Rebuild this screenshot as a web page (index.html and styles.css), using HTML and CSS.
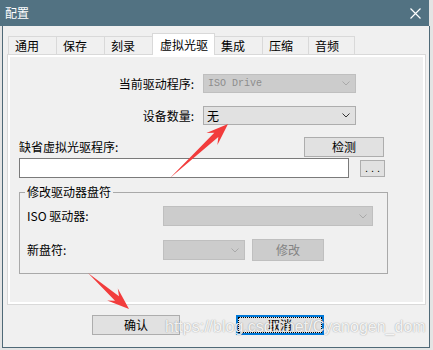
FILE: index.html
```html
<!DOCTYPE html>
<html lang="zh-CN">
<head>
    <meta charset="UTF-8">
    <meta name="viewport" content="width=device-width, initial-scale=1.0">
    <title>配置</title>
    <link rel="stylesheet" href="styles.css">
</head>
<body>

<div class="window">
    <div class="titlebar">
        <span class="title">配置</span>
        <svg class="close" width="11" height="11" viewBox="0 0 11 11">
            <path d="M0.5 0.5 L10.5 10.5 M10.5 0.5 L0.5 10.5" stroke="#fff" stroke-width="1.2" fill="none"/>
        </svg>
    </div>

    <div class="client">
        <div class="tabs">
            <div class="tab">通用</div>
            <div class="tab">保存</div>
            <div class="tab">刻录</div>
            <div class="tab tab-active">虚拟光驱</div>
            <div class="tab">集成</div>
            <div class="tab tab-narrow">压缩</div>
            <div class="tab tab-narrow">音频</div>
        </div>

        <div class="panel">
            <div class="page">
                <div class="row">
                    <span class="row-label">当前驱动程序:</span>
                    <div class="combo combo-main combo-disabled">
                        <span class="mono">ISO Drive</span>
                        <svg class="chevron" width="8" height="5" viewBox="0 0 8 5"><path d="M0.5 0.5 L4 4 L7.5 0.5" fill="none" stroke="currentColor"/></svg>
                    </div>
                </div>

                <div class="row row-count">
                    <span class="row-label">设备数量:</span>
                    <div class="combo combo-main">
                        <span>无</span>
                        <svg class="chevron" width="8" height="5" viewBox="0 0 8 5"><path d="M0.5 0.5 L4 4 L7.5 0.5" fill="none" stroke="currentColor"/></svg>
                    </div>
                </div>

                <div class="row row-default">
                    <span>缺省虚拟光驱程序:</span>
                    <button class="btn btn-detect">检测</button>
                </div>

                <div class="row row-path">
                    <div class="path-input"></div>
                    <button class="btn btn-browse">...</button>
                </div>

                <fieldset class="group">
                    <legend>修改驱动器盘符</legend>
                    <div class="group-row">
                        <span class="group-label">ISO 驱动器:</span>
                        <div class="combo combo-iso combo-disabled">
                            <span></span>
                            <svg class="chevron" width="8" height="5" viewBox="0 0 8 5"><path d="M0.5 0.5 L4 4 L7.5 0.5" fill="none" stroke="currentColor"/></svg>
                        </div>
                    </div>
                    <div class="group-row group-row-letter">
                        <span class="group-label">新盘符:</span>
                        <div class="combo combo-letter combo-disabled">
                            <span></span>
                            <svg class="chevron" width="8" height="5" viewBox="0 0 8 5"><path d="M0.5 0.5 L4 4 L7.5 0.5" fill="none" stroke="currentColor"/></svg>
                        </div>
                        <button class="btn btn-modify btn-disabled">修改</button>
                    </div>
                </fieldset>
            </div>
        </div>

        <div class="actions">
            <button class="btn btn-dialog">确认</button>
            <button class="btn btn-dialog btn-focused">取消</button>
        </div>
    </div>
</div>

<svg class="arrows" width="433" height="350" viewBox="0 0 433 350">
    <polygon points="170,178 218.3,137.1 217.4,144.9 228,124 206.4,133.1 214.3,132.7" fill="#f23c3c"/>
    <polygon points="88,273 115,300.8 107.2,300.5 129,309 117.8,288.5 119,296.2" fill="#f23c3c"/>
</svg>

<div class="watermark">https://blog.csdn.net/Cyanogen_dom</div>

</body>
</html>
```

FILE: styles.css
```css
* {
    box-sizing: border-box;
}
body {
    margin: 0;
    width: 433px;
    height: 350px;
    overflow: hidden;
    position: relative;
    background-color: #e4e4e4;
    font-family: "Noto Sans CJK SC", sans-serif;
    font-size: 12px;
    line-height: 16px;
    color: #000;
}
.window {
    width: 430px;
}
.titlebar {
    width: 429px;
    height: 26px;
    background-color: #527282;
    color: #fff;
    display: flex;
    align-items: center;
    justify-content: space-between;
    padding: 0 8px 0 5px;
}
.close {
    display: block;
}
.client {
    margin-left: 2px;
    width: 428px;
    height: 322px;
    border: 1px solid #4f6977;
    border-top: none;
    background-color: #f0f0f0;
}

/* tabs */
.tabs {
    display: flex;
    align-items: flex-end;
    height: 28px;
    padding: 7px 0 0 5px;
}
.tab {
    width: 49px;
    height: 18px;
    margin-left: -1px;
    padding: 1px 0 0 6px;
    border: 1px solid #d9d9d9;
    border-bottom: none;
    background-color: #f0f0f0;
}
.tab:first-child {
    margin-left: 0;
}
.tab-narrow {
    width: 47px;
}
.tab-active {
    width: 63px;
    height: 22px;
    margin-bottom: -1px;
    padding: 3px 0 0 7px;
    background-color: #fff;
    position: relative;
    z-index: 1;
}
.panel {
    margin-left: 4px;
    width: 419px;
    height: 251px;
    border: 1px solid #d9d9d9;
    padding: 2px;
    background-color: #fff;
}
.page {
    height: 100%;
    background-color: #f0f0f0;
    padding: 17px 0 0 9px;
}

/* rows */
.row {
    display: flex;
    align-items: center;
}
.row-label {
    width: 175px;
    margin-right: 9px;
    text-align: right;
}
.row-count {
    margin-top: 13px;
}
.row-default {
    margin-top: 12px;
    width: 365px;
    justify-content: space-between;
}
.row-path {
    margin-top: 1px;
}
.path-input {
    width: 330px;
    height: 20px;
    border: 1px solid #7a7a7a;
    background-color: #fff;
}

/* combo boxes */
.combo {
    height: 19px;
    display: flex;
    align-items: center;
    justify-content: space-between;
    padding: 0 5px 0 3px;
    border: 1px solid #adadad;
    background-color: #e1e1e1;
    color: #333;
}
.combo span {
    color: #000;
}
.combo-main {
    width: 153px;
}
.combo-disabled {
    background-color: #cccccc;
    border-color: #bfbfbf;
    color: #a9a9a9;
}
.combo-disabled span {
    color: #8c8c8c;
}
.chevron {
    display: block;
}
.mono {
    font-family: "Liberation Mono", monospace;
    font-size: 10px;
    padding-left: 1px;
}

/* buttons */
.btn {
    font: inherit;
    height: 20px;
    padding: 0;
    border: 1px solid #adadad;
    background-color: #e1e1e1;
    color: #000;
}
.btn-detect {
    width: 80px;
}
.btn-browse {
    width: 25px;
    height: 17px;
    margin-left: 11px;
    font-family: "Liberation Sans", sans-serif;
    font-size: 11px;
    letter-spacing: 3px;
    padding-left: 3px;
    line-height: 12px;
}
.btn-disabled {
    background-color: #cccccc;
    border-color: #bfbfbf;
    color: #838383;
}

/* group box */
.group {
    margin: 6px 0 0;
    width: 369px;
    height: 90px;
    min-width: 0;
    border: 1px solid #a9a9a9;
    padding: 6px 0 0 5px;
}
.group legend {
    padding: 0 2px;
    line-height: 16px;
}
.group-row {
    display: flex;
    align-items: center;
    height: 20px;
    padding-left: 2px;
}
.group-row-letter {
    margin-top: 13px;
    height: 22px;
}
.group-label {
    width: 136px;
}
.combo-iso {
    width: 210px;
    height: 20px;
}
.combo-letter {
    width: 82px;
    height: 20px;
}
.btn-modify {
    width: 72px;
    height: 22px;
    margin-left: 7px;
}

/* dialog buttons */
.actions {
    display: flex;
    gap: 56px;
    padding: 10px 0 0 89px;
}
.btn-dialog {
    width: 88px;
    height: 20px;
}
.btn-focused {
    border: 2px solid #0078d7;
    position: relative;
}
.btn-focused::after {
    content: "";
    position: absolute;
    top: 0;
    left: 0;
    right: 0;
    bottom: 0;
    border: 1px dotted #000;
}

/* overlays */
.arrows {
    position: absolute;
    top: 0;
    left: 0;
    pointer-events: none;
}
.watermark {
    position: absolute;
    left: 165px;
    top: 319px;
    font-family: "Liberation Sans", sans-serif;
    font-size: 16px;
    line-height: 16px;
    white-space: nowrap;
    color: rgba(255, 255, 255, 0.9);
    text-shadow: 0 0 1px rgba(0, 0, 0, 0.3), 0 0 2px rgba(0, 0, 0, 0.15);
    pointer-events: none;
}
```
